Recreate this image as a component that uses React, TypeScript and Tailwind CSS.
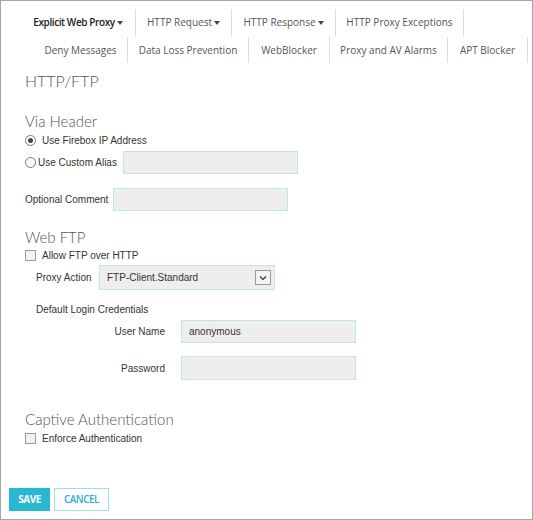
import React from "react";

const tabFont = { fontFamily: '"Open Sans", "Noto Sans", sans-serif' };
const labelFont = { fontFamily: '"Liberation Sans", Arial, sans-serif' };
const headFont = { fontFamily: 'Lato, "Open Sans", sans-serif' };

function Caret() {
  return <span className="inline-block ml-[2px] align-middle border-l-[3px] border-r-[3px] border-t-[4px] border-l-transparent border-r-transparent border-t-[#444]" />;
}

function Tab({ children, bold, caret, w }: { children: React.ReactNode; bold?: boolean; caret?: boolean; w: number }) {
  return (
    <div className="flex items-center justify-center border-r border-[#dcdcdc] h-full whitespace-nowrap" style={{ width: w }}>
      <span className={bold ? "text-[#222] font-semibold tracking-[-0.4px]" : "text-[#555]"}>{children}</span>
      {caret && <Caret />}
    </div>
  );
}

function Field({ w = 175, h = 23, children }: { w?: number; h?: number; children?: React.ReactNode }) {
  return (
    <div
      className="bg-[#eeeeee] border border-[#bfe5ee] flex items-center px-[7px] text-[10px] text-[#333]"
      style={{ width: w, height: h }}
    >
      {children}
    </div>
  );
}

function Check({ label }: { label: string }) {
  return (
    <div className="flex items-center h-[14px] whitespace-nowrap">
      <div className="w-[11px] h-[11px] border border-[#9a9a9a] bg-[#f2f2f2]" />
      <span className="ml-[6px] text-[10px] text-[#333]">{label}</span>
    </div>
  );
}

function Radio({ checked, label }: { checked?: boolean; label: string }) {
  return (
    <div className="flex items-center h-[14px] whitespace-nowrap">
      <div className="w-[11px] h-[11px] rounded-full border border-[#777] bg-white flex items-center justify-center">
        {checked && <div className="w-[5px] h-[5px] rounded-full bg-[#444]" />}
      </div>
      <span className={`${checked ? "ml-[6px]" : "ml-[2px]"} text-[10px] text-[#333]`}>{label}</span>
    </div>
  );
}

export default function App() {
  return (
    <div className="w-[533px] h-[520px] bg-white border border-[#a6a6a6] flex flex-col overflow-hidden" style={labelFont}>
      <div className="text-[10px]" style={tabFont}>
        <div className="flex h-[27px] mt-[8px] ml-[20px]">
          <Tab w={115} bold caret>Explicit Web Proxy</Tab>
          <Tab w={96} caret>HTTP Request</Tab>
          <Tab w={104} caret>HTTP Response</Tab>
          <Tab w={128}>HTTP Proxy Exceptions</Tab>
        </div>
        <div className="flex h-[26px] mt-[1px] ml-[33px]">
          <Tab w={94}>Deny Messages</Tab>
          <Tab w={121}>Data Loss Prevention</Tab>
          <Tab w={81}>WebBlocker</Tab>
          <Tab w={118}>Proxy and AV Alarms</Tab>
          <Tab w={80}>APT Blocker</Tab>
        </div>
      </div>

      <div className="pl-[24px] flex flex-col">
        <div className="mt-[8px] text-[16px] leading-[20px] text-[#555] font-light" style={headFont}>HTTP/FTP</div>

        <div className="mt-[20px] text-[15px] leading-[20px] text-[#555] font-light" style={headFont}>Via Header</div>
        <div className="mt-[2px]"><Radio checked label="Use Firebox IP Address" /></div>
        <div className="mt-[4px] flex items-center">
          <div className="w-[98px]"><Radio label="Use Custom Alias" /></div>
          <Field />
        </div>
        <div className="mt-[14px] flex items-center">
          <div className="w-[88px] text-[10px] text-[#333] whitespace-nowrap">Optional Comment</div>
          <Field />
        </div>

        <div className="mt-[16px] text-[15px] leading-[20px] text-[#555] font-light" style={headFont}>Web FTP</div>
        <div className="mt-[1px]"><Check label="Allow FTP over HTTP" /></div>
        <div className="mt-[3px] pl-[11px] flex items-center">
          <div className="w-[63px] text-[10px] text-[#333] whitespace-nowrap">Proxy Action</div>
          <div className="w-[176px] h-[25px] bg-[#eeeeee] border border-[#bfe5ee] flex items-center justify-between pl-[7px] pr-[3px] text-[10px] text-[#333]">
            <span>FTP-Client.Standard</span>
            <div className="w-[16px] h-[15px] border border-[#999] bg-[#f4f4f4] flex items-center justify-center">
              <svg width="8" height="6" viewBox="0 0 8 6"><path d="M1 1.5 L4 4.5 L7 1.5" fill="none" stroke="#333" strokeWidth="1.2" /></svg>
            </div>
          </div>
        </div>
        <div className="mt-[12px] pl-[11px] h-[14px] flex items-center text-[10px] text-[#333]">Default Login Credentials</div>
        <div className="mt-[4px] pl-[11px] flex items-center">
          <div className="w-[129px] text-right text-[10px] text-[#333]">User Name</div>
          <div className="ml-[16px]"><Field>anonymous</Field></div>
        </div>
        <div className="mt-[13px] pl-[11px] flex items-center">
          <div className="w-[129px] text-right text-[10px] text-[#333]">Password</div>
          <div className="ml-[16px]"><Field h={24} /></div>
        </div>

        <div className="mt-[29px] text-[15px] leading-[20px] text-[#555] font-light" style={headFont}>Captive Authentication</div>
        <div className="mt-[2px]"><Check label="Enforce Authentication" /></div>
      </div>

      <div className="mt-auto mb-[8px] ml-[8px] flex gap-[4px]" style={tabFont}>
        <div className="w-[41px] h-[23px] bg-[#29b8d3] text-white text-[10px] font-bold flex items-center justify-center tracking-[-0.5px]">SAVE</div>
        <div className="w-[55px] h-[23px] border border-[#9fdde9] text-[#29b0cc] text-[10px] font-semibold flex items-center justify-center tracking-[-0.5px]">CANCEL</div>
      </div>
    </div>
  );
}
